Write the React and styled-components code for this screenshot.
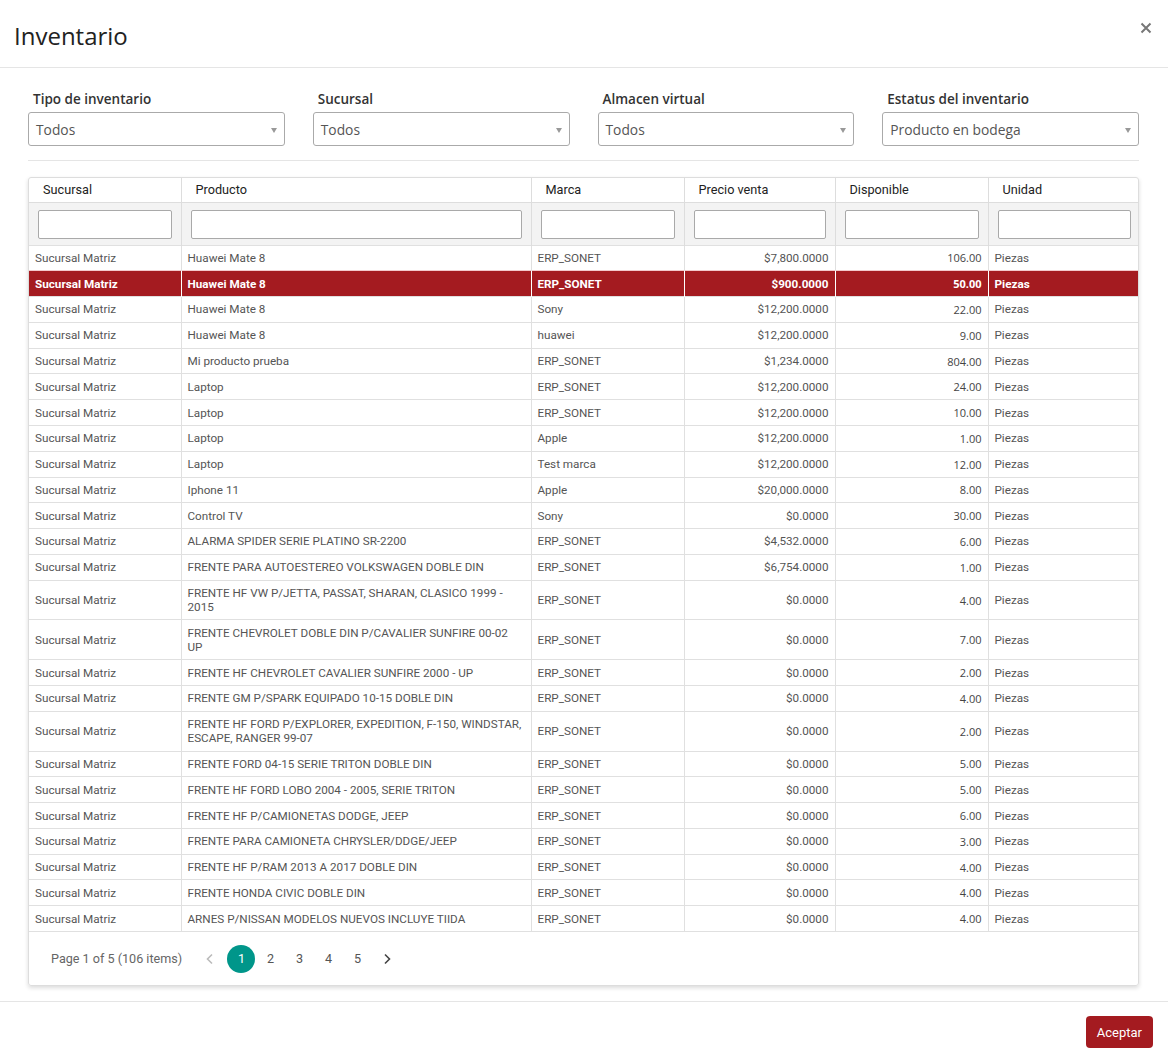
import React from 'react';
import styled, { createGlobalStyle } from 'styled-components';

const GlobalStyle = createGlobalStyle`
  html, body {
    margin: 0;
    padding: 0;
    background: #fff;
  }
  body {
    font-family: "Open Sans", "Liberation Sans", sans-serif;
    color: #333;
  }
  * { box-sizing: border-box; }
`;

const RED = '#a41b20';

const rows = [
  ['Huawei Mate 8', 'ERP_SONET', '$7,800.0000', '106.00'],
  ['Huawei Mate 8', 'ERP_SONET', '$900.0000', '50.00'],
  ['Huawei Mate 8', 'Sony', '$12,200.0000', '22.00'],
  ['Huawei Mate 8', 'huawei', '$12,200.0000', '9.00'],
  ['Mi producto prueba', 'ERP_SONET', '$1,234.0000', '804.00'],
  ['Laptop', 'ERP_SONET', '$12,200.0000', '24.00'],
  ['Laptop', 'ERP_SONET', '$12,200.0000', '10.00'],
  ['Laptop', 'Apple', '$12,200.0000', '1.00'],
  ['Laptop', 'Test marca', '$12,200.0000', '12.00'],
  ['Iphone 11', 'Apple', '$20,000.0000', '8.00'],
  ['Control TV', 'Sony', '$0.0000', '30.00'],
  ['ALARMA SPIDER SERIE PLATINO SR-2200', 'ERP_SONET', '$4,532.0000', '6.00'],
  ['FRENTE PARA AUTOESTEREO VOLKSWAGEN DOBLE DIN', 'ERP_SONET', '$6,754.0000', '1.00'],
  ['FRENTE HF VW P/JETTA, PASSAT, SHARAN, CLASICO 1999 - 2015', 'ERP_SONET', '$0.0000', '4.00'],
  ['FRENTE CHEVROLET DOBLE DIN P/CAVALIER SUNFIRE 00-02 UP', 'ERP_SONET', '$0.0000', '7.00'],
  ['FRENTE HF CHEVROLET CAVALIER SUNFIRE 2000 - UP', 'ERP_SONET', '$0.0000', '2.00'],
  ['FRENTE GM P/SPARK EQUIPADO 10-15 DOBLE DIN', 'ERP_SONET', '$0.0000', '4.00'],
  ['FRENTE HF FORD P/EXPLORER, EXPEDITION, F-150, WINDSTAR, ESCAPE, RANGER 99-07', 'ERP_SONET', '$0.0000', '2.00'],
  ['FRENTE FORD 04-15 SERIE TRITON DOBLE DIN', 'ERP_SONET', '$0.0000', '5.00'],
  ['FRENTE HF FORD LOBO 2004 - 2005, SERIE TRITON', 'ERP_SONET', '$0.0000', '5.00'],
  ['FRENTE HF P/CAMIONETAS DODGE, JEEP', 'ERP_SONET', '$0.0000', '6.00'],
  ['FRENTE PARA CAMIONETA CHRYSLER/DDGE/JEEP', 'ERP_SONET', '$0.0000', '3.00'],
  ['FRENTE HF P/RAM 2013 A 2017 DOBLE DIN', 'ERP_SONET', '$0.0000', '4.00'],
  ['FRENTE HONDA CIVIC DOBLE DIN', 'ERP_SONET', '$0.0000', '4.00'],
  ['ARNES P/NISSAN MODELOS NUEVOS INCLUYE TIIDA', 'ERP_SONET', '$0.0000', '4.00'],
];

const filters = [
  { label: 'Tipo de inventario', value: 'Todos' },
  { label: 'Sucursal', value: 'Todos' },
  { label: 'Almacen virtual', value: 'Todos' },
  { label: 'Estatus del inventario', value: 'Producto en bodega' },
];

const columns = [
  { title: 'Sucursal', width: 152 },
  { title: 'Producto', width: 350 },
  { title: 'Marca', width: 153 },
  { title: 'Precio venta', width: 151 },
  { title: 'Disponible', width: 153 },
  { title: 'Unidad', width: 152 },
];

const Modal = styled.div`
  width: 1168px;
  min-height: 1064px;
  background: #fff;
  display: flex;
  flex-direction: column;
`;

const Header = styled.div`
  height: 68px;
  border-bottom: 1px solid #e5e5e5;
  display: flex;
  align-items: center;
  justify-content: space-between;
  padding: 0 16px 6px 14px;
`;

const Title = styled.h4`
  margin: 10px 0 0;
  font-family: "Open Sans", sans-serif;
  font-size: 24px;
  font-weight: 400;
  color: #222;
  line-height: 1;
`;

const Close = styled.button`
  border: 0;
  background: none;
  padding: 0;
  width: 12px;
  height: 12px;
  display: flex;
  margin-bottom: 6px;
  cursor: pointer;
`;

const Body = styled.div`
  padding: 22px 29px 0 28px;
`;

const FilterGrid = styled.div`
  display: grid;
  grid-template-columns: repeat(4, 1fr);
  column-gap: 28px;
  padding-bottom: 14px;
  border-bottom: 1px solid #e5e5e5;
`;

const Field = styled.div`
  display: flex;
  flex-direction: column;
`;

const Label = styled.label`
  font-family: "Open Sans", sans-serif;
  font-size: 13.5px;
  font-weight: 600;
  color: #333;
  padding-left: 5px;
  height: 22px;
  line-height: 18px;
`;

const Select = styled.div`
  height: 34px;
  border: 1px solid #aaa;
  border-radius: 3px;
  display: flex;
  align-items: center;
  justify-content: space-between;
  padding: 0 7px 0 7px;
  font-family: "Open Sans", sans-serif;
  font-size: 13.8px;
  color: #555;
`;

const Caret = styled.span`
  width: 0;
  height: 0;
  border-left: 3.5px solid transparent;
  border-right: 3.5px solid transparent;
  border-top: 5px solid #999;
  margin-top: 2px;
`;

const GridBox = styled.div`
  margin-top: 16px;
  border: 1px solid #ddd;
  border-radius: 3px;
  box-shadow: 0 2px 4px rgba(0, 0, 0, 0.14);
  overflow: hidden;
  font-family: Roboto, "Liberation Sans", sans-serif;
`;

const Table = styled.table`
  width: 100%;
  table-layout: fixed;
  border-collapse: collapse;
`;

const Th = styled.th`
  height: 24px;
  padding: 0 14px;
  text-align: left;
  font-weight: 400;
  font-size: 12.7px;
  color: #222;
  border-right: 1px solid #ddd;
  border-bottom: 1px solid #ddd;
  &:last-child { border-right: 0; }
`;

const FilterCell = styled.td`
  background: #f3f3f3;
  padding: 7px 9px 6px 9px;
  border-right: 1px solid #ddd;
  &:last-child { border-right: 0; }
`;

const FilterInput = styled.input`
  display: block;
  width: 100%;
  height: 29px;
  border: 1px solid #a9a9a9;
  border-radius: 2px;
  background: #fff;
  outline: none;
`;

const Tr = styled.tr`
  background: ${(p) => (p.$selected ? RED : '#fff')};
  color: ${(p) => (p.$selected ? '#fff' : '#555')};
  font-weight: ${(p) => (p.$selected ? 700 : 400)};
`;

const Td = styled.td`
  padding: 5.4px 6px;
  line-height: 14px;
  font-size: 11.7px;
  text-align: ${(p) => p.$align || 'left'};
  border-top: 1px solid ${(p) => (p.$selected ? '#f3c9cb' : '#e0e0e0')};
  border-right: 1px solid ${(p) => (p.$selected ? '#fff' : '#e0e0e0')};
  vertical-align: middle;
  &:last-child { border-right: 0; }
`;

const NumText = styled.span`
  font-family: "Open Sans", sans-serif;
  font-size: 11px;
  color: ${(p) => (p.$selected ? '#fff' : '#444')};
  position: relative;
  top: 0.5px;
`;

const Pager = styled.div`
  border-top: 1px solid #e0e0e0;
  height: 54px;
  display: flex;
  align-items: center;
  padding-left: 22px;
  font-size: 12.6px;
  color: #666;
`;

const PagerInfo = styled.span`
  margin-right: 13px;
`;

const PageBtn = styled.span`
  width: 29px;
  height: 28px;
  display: flex;
  align-items: center;
  justify-content: center;
  margin-right: ${(p) => (p.$gap ? '3px' : '0')};
  color: ${(p) => (p.$active ? '#fff' : '#555')};
  position: relative;
  &::before {
    content: '';
    display: ${(p) => (p.$active ? 'block' : 'none')};
    position: absolute;
    left: 0;
    top: 0;
    width: 28px;
    height: 28px;
    border-radius: 50%;
    background: #00968a;
  }
  & > * { position: relative; }
`;

const Footer = styled.div`
  margin-top: 15px;
  border-top: 1px solid #e5e5e5;
  padding: 14px 15px 16px;
  display: flex;
  justify-content: flex-end;
`;

const Button = styled.button`
  height: 32px;
  padding: 0 11px;
  border: 0;
  border-radius: 4px;
  background: ${RED};
  color: #fff;
  font-family: Roboto, "Liberation Sans", sans-serif;
  font-size: 13px;
`;

const Chevron = ({ dir, color }) => (
  <svg width="10" height="12" viewBox="0 0 10 12">
    <path
      d={dir === 'left' ? 'M7 1.5 L2.5 6 L7 10.5' : 'M3 1.5 L7.5 6 L3 10.5'}
      fill="none"
      stroke={color}
      strokeWidth="1.6"
    />
  </svg>
);

export default function App() {
  return (
    <Modal>
      <GlobalStyle />
      <Header>
        <Title>Inventario</Title>
        <Close aria-label="close">
          <svg width="12" height="12" viewBox="0 0 12 12">
            <path d="M1.5 1.5 L10.5 10.5 M10.5 1.5 L1.5 10.5" stroke="#777" strokeWidth="2" />
          </svg>
        </Close>
      </Header>
      <Body>
        <FilterGrid>
          {filters.map((f) => (
            <Field key={f.label}>
              <Label>{f.label}</Label>
              <Select>
                <span>{f.value}</span>
                <Caret />
              </Select>
            </Field>
          ))}
        </FilterGrid>

        <GridBox>
          <Table>
            <colgroup>
              {columns.map((c) => (
                <col key={c.title} style={{ width: c.width }} />
              ))}
            </colgroup>
            <thead>
              <tr>
                {columns.map((c) => (
                  <Th key={c.title}>{c.title}</Th>
                ))}
              </tr>
              <tr>
                {columns.map((c) => (
                  <FilterCell key={c.title}>
                    <FilterInput />
                  </FilterCell>
                ))}
              </tr>
            </thead>
            <tbody>
              {rows.map(([prod, marca, precio, disp], i) => {
                const sel = i === 1;
                return (
                  <Tr key={i} $selected={sel}>
                    <Td $selected={sel}>Sucursal Matriz</Td>
                    <Td $selected={sel}>{prod}</Td>
                    <Td $selected={sel}>{marca}</Td>
                    <Td $selected={sel} $align="right">{precio}</Td>
                    <Td $selected={sel} $align="right">
                      <NumText $selected={sel}>{disp}</NumText>
                    </Td>
                    <Td $selected={sel}>Piezas</Td>
                  </Tr>
                );
              })}
            </tbody>
          </Table>
          <Pager>
            <PagerInfo>Page 1 of 5 (106 items)</PagerInfo>
            <PageBtn $gap>
              <Chevron dir="left" color="#bbb" />
            </PageBtn>
            <PageBtn $active>
              <span>1</span>
            </PageBtn>
            {[2, 3, 4, 5].map((n) => (
              <PageBtn key={n}>
                <span>{n}</span>
              </PageBtn>
            ))}
            <PageBtn>
              <Chevron dir="right" color="#444" />
            </PageBtn>
          </Pager>
        </GridBox>
      </Body>
      <Footer>
        <Button>Aceptar</Button>
      </Footer>
    </Modal>
  );
}
